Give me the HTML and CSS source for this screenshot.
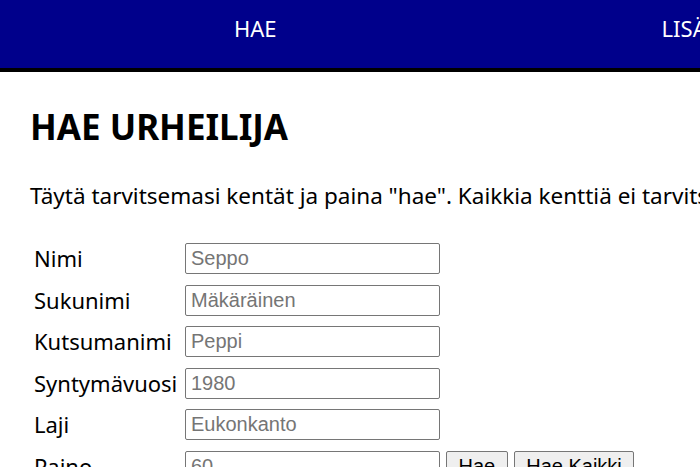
FILE: index.html
```html
<!DOCTYPE html>
<html lang="fi">
<head>
<meta charset="utf-8">
<title>Hae urheilija</title>
<link rel="stylesheet" href="styles.css">
</head>
<body>
<nav class="nav">
  <a class="nav-link nav-hae" href="#">HAE</a>
  <a class="nav-link nav-lisaa" href="#">LISÄÄ</a>
</nav>
<main class="content">
  <h1 class="title">HAE URHEILIJA</h1>
  <p class="intro">Täytä tarvitsemasi kentät ja paina "hae". Kaikkia kenttiä ei tarvitse täyttää.</p>
  <form class="form">
    <label class="label" for="nimi">Nimi</label>
    <input class="field" id="nimi" type="text" placeholder="Seppo">
    <span></span>
    <label class="label" for="sukunimi">Sukunimi</label>
    <input class="field" id="sukunimi" type="text" placeholder="Mäkäräinen">
    <span></span>
    <label class="label" for="kutsumanimi">Kutsumanimi</label>
    <input class="field" id="kutsumanimi" type="text" placeholder="Peppi">
    <span></span>
    <label class="label" for="vuosi">Syntymävuosi</label>
    <input class="field" id="vuosi" type="text" placeholder="1980">
    <span></span>
    <label class="label" for="laji">Laji</label>
    <input class="field" id="laji" type="text" placeholder="Eukonkanto">
    <span></span>
    <label class="label" for="paino">Paino</label>
    <input class="field" id="paino" type="text" placeholder="60">
    <div class="buttons">
      <button class="btn" type="button">Hae</button>
      <button class="btn" type="button">Hae Kaikki</button>
    </div>
  </form>
</main>
</body>
</html>
```
FILE: styles.css
```css
html, body {
  margin: 0;
  padding: 0;
  overflow: hidden;
  background: #fff;
}
body {
  font-family: "Noto Sans", "Open Sans", sans-serif;
  color: #000;
  width: 700px;
  height: 467px;
}
.nav {
  display: flex;
  align-items: center;
  height: 68px;
  background: #00008b;
  border-bottom: 4px solid #000;
  white-space: nowrap;
}
.nav-link {
  color: #fff;
  text-decoration: none;
  font-size: 22px;
  line-height: 24px;
  margin-top: -12px;
}
.nav-hae {
  margin-left: 234px;
}
.nav-lisaa {
  margin-left: 385px;
}
.content {
  padding: 0 30px;
}
.title {
  margin: 33px 0 0;
  font-size: 35px;
  line-height: 44px;
  font-weight: 700;
}
.intro {
  margin: 32px 0 0;
  font-size: 22.5px;
  line-height: 30px;
  white-space: nowrap;
}
.form {
  display: grid;
  grid-template-columns: 145px 255px auto;
  column-gap: 6px;
  row-gap: 10.6px;
  margin-top: 32px;
  padding-left: 4px;
  align-items: center;
}
.label {
  font-size: 22px;
  line-height: 31px;
  white-space: nowrap;
}
.field {
  box-sizing: border-box;
  width: 255px;
  height: 31px;
  margin: 0;
  padding: 1px 5px;
  border: 1px solid #767676;
  border-radius: 2px;
  font-family: "Liberation Sans", Arial, sans-serif;
  font-size: 20px;
}
.field::placeholder {
  color: #757575;
}
.buttons {
  display: flex;
  gap: 6px;
}
.btn {
  box-sizing: border-box;
  height: 31px;
  margin: 0;
  padding: 1px 11.5px;
  background: #efefef;
  border: 1px solid #767676;
  border-radius: 2px;
  font-family: "Liberation Sans", Arial, sans-serif;
  font-size: 20px;
  color: #000;
}
```
